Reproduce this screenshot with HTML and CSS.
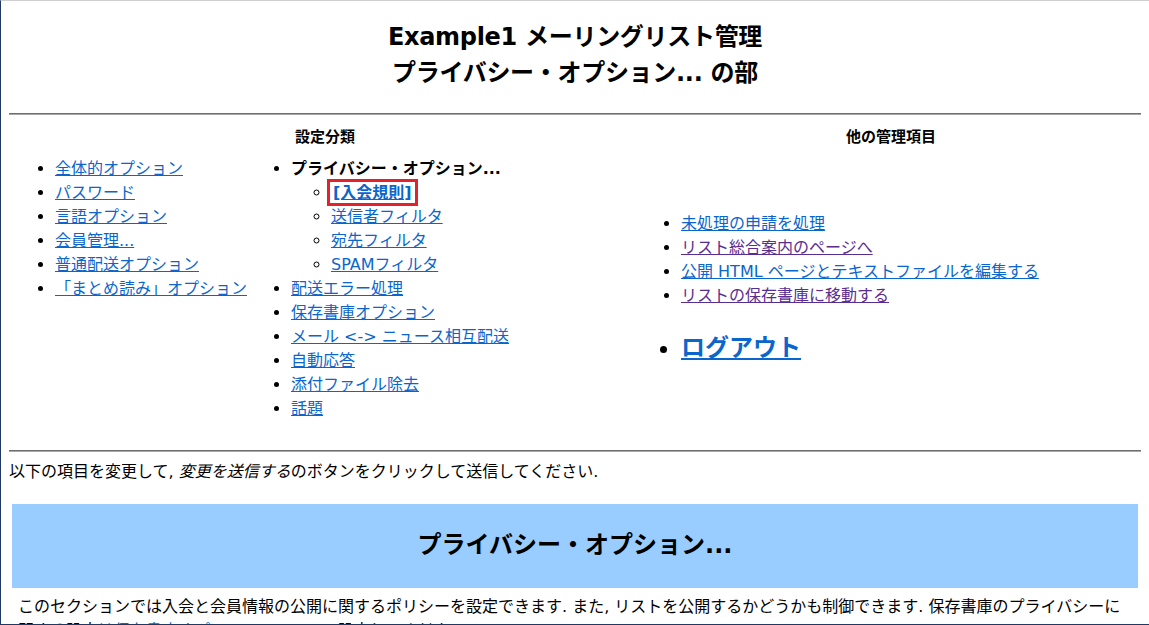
FILE: index.html
```html
<!DOCTYPE html>
<html lang="ja">
<head>
<meta charset="utf-8">
<title>Example1 メーリングリスト管理</title>
<link rel="stylesheet" href="styles.css">
</head>
<body>
<div class="frame">
  <h1 class="title">Example1 メーリングリスト管理<br>プライバシー・オプション... の部</h1>
  <hr class="rule">
  <div class="nav">
    <div class="nav-head nav-head-cat">設定分類</div>
    <div class="nav-head nav-head-other">他の管理項目</div>
    <ul class="list col1">
      <li><a href="#">全体的オプション</a></li>
      <li><a href="#">パスワード</a></li>
      <li><a href="#">言語オプション</a></li>
      <li><a href="#">会員管理...</a></li>
      <li><a href="#">普通配送オプション</a></li>
      <li><a href="#">「まとめ読み」オプション</a></li>
    </ul>
    <ul class="list col2">
      <li><strong>プライバシー・オプション...</strong>
        <ul class="sub">
          <li><a href="#" class="current">[入会規則]</a></li>
          <li><a href="#">送信者フィルタ</a></li>
          <li><a href="#">宛先フィルタ</a></li>
          <li><a href="#">SPAMフィルタ</a></li>
        </ul>
      </li>
      <li><a href="#">配送エラー処理</a></li>
      <li><a href="#">保存書庫オプション</a></li>
      <li><a href="#">メール &lt;-&gt; ニュース相互配送</a></li>
      <li><a href="#">自動応答</a></li>
      <li><a href="#">添付ファイル除去</a></li>
      <li><a href="#">話題</a></li>
    </ul>
    <div class="col3">
      <ul class="list">
        <li><a href="#">未処理の申請を処理</a></li>
        <li><a href="#" class="visited">リスト総合案内のページへ</a></li>
        <li><a href="#">公開 HTML ページとテキストファイルを編集する</a></li>
        <li><a href="#" class="visited">リストの保存書庫に移動する</a></li>
      </ul>
      <ul class="list logout">
        <li><a href="#">ログアウト</a></li>
      </ul>
    </div>
  </div>
  <hr class="rule rule2">
  <p class="intro">以下の項目を変更して, <em>変更を送信する</em>のボタンをクリックして送信してください.</p>
  <div class="section">
    <h2 class="section-title">プライバシー・オプション...</h2>
  </div>
  <p class="desc">このセクションでは入会と会員情報の公開に関するポリシーを設定できます. また, リストを公開するかどうかも制御できます. 保存書庫のプライバシーに関する設定は<a href="#">保存書庫オプション</a>のページで設定してください.</p>
</div>
</body>
</html>
```

FILE: styles.css
```css
html, body {
  margin: 0;
  padding: 0;
  height: 100%;
  overflow: hidden;
}
body {
  background: #fff;
  color: #000;
  font-family: "DejaVu Sans", "Noto Sans CJK JP", sans-serif;
  font-size: 16px;
}
.frame {
  box-sizing: border-box;
  height: 625px;
  border-left: 1px solid #1f3864;
  border-top: 1px solid #cfcfcf;
  border-bottom: 1px solid #1f3864;
  padding: 0 8px 0 8px;
  overflow: hidden;
}
a {
  color: #0a66cc;
  text-decoration: underline;
}
a.visited {
  color: #5a2d91;
}
.title {
  margin: 0;
  padding-top: 18px;
  text-align: center;
  font-size: 24px;
  line-height: 36px;
  font-weight: bold;
  letter-spacing: -0.3px;
}
.rule {
  margin: 22px 0 0 0;
  border: 0;
  height: 2px;
  background: linear-gradient(#6e6e6e 50%, #a8a8a8 50%);
}
.nav {
  display: grid;
  grid-template-columns: 242px 390px 1fr;
  grid-template-rows: auto auto;
  margin-top: 10px;
}
.nav-head {
  font-weight: bold;
  font-size: 15px;
  line-height: 24px;
  text-align: center;
}
.nav-head-cat {
  grid-column: 1 / 3;
}
.nav-head-other {
  grid-column: 3;
}
.list {
  margin: 8px 0 0 0;
  padding-left: 40px;
  list-style: disc;
}
.list li {
  line-height: 24px;
}
.col1 {
  padding-left: 46px;
}
.sub {
  margin: 0;
  padding-left: 40px;
  list-style: circle;
}
.sub li {
  line-height: 24px;
}
.current {
  font-weight: bold;
  padding: 0 2px;
  outline: 3px solid #e4222b;
  outline-offset: 1px;
}
.col3 {
  display: flex;
  flex-direction: column;
  justify-content: center;
  padding-top: 8px;
}
.col3 .list {
  margin: 0;
}
.col3 .logout {
  margin-top: 22px;
}
.logout li {
  font-size: 24px;
  font-weight: bold;
  line-height: 36px;
}
.rule2 {
  margin-top: 29px;
}
.intro {
  margin: 8px 0 0 0;
  line-height: 24px;
}
.section {
  margin: 20px 3px 0 3px;
  background: #99ccff;
  height: 84px;
  box-sizing: border-box;
  padding-bottom: 8px;
  display: flex;
  align-items: center;
  justify-content: center;
}
.section-title {
  margin: 0;
  font-size: 24px;
  font-weight: bold;
}
.desc {
  margin: 7px 0 0 9px;
  line-height: 24px;
  padding-right: 10px;
}
```
